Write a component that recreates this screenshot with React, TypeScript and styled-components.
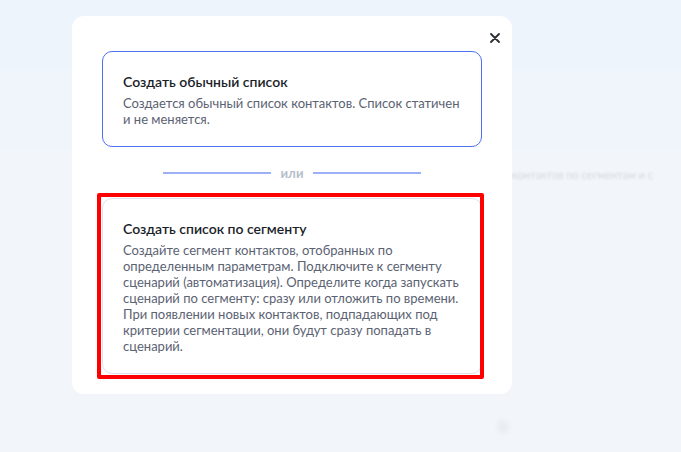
import styled, { createGlobalStyle } from 'styled-components';

const GlobalStyle = createGlobalStyle`
    html, body {
        margin: 0;
        padding: 0;
    }
    body {
        font-family: Lato, Roboto, sans-serif;
        background: #f1f5fa;
    }
`;

const Page = styled.div`
    position: relative;
    width: 681px;
    height: 452px;
    overflow: hidden;
    background: linear-gradient(#eef4fc 0, #eef4fc 70px, #f0f5fb 70px, #f0f5fb 150px, #f2f6fa 150px);
`;

const GhostText = styled.div`
    position: absolute;
    left: 512px;
    top: 168px;
    font-size: 11px;
    color: #d3d9e2;
    filter: blur(1px);
    white-space: nowrap;
`;

const GhostDot = styled.div`
    position: absolute;
    left: 497px;
    top: 420px;
    width: 12px;
    height: 14px;
    border-radius: 50%;
    background: #e9edf2;
    filter: blur(2px);
`;

const Modal = styled.div`
    position: absolute;
    left: 72px;
    top: 16px;
    width: 440px;
    box-sizing: border-box;
    padding: 35px 30px 20px;
    background: #fff;
    border-radius: 12px;
    display: flex;
    flex-direction: column;
`;

const Close = styled.button`
    position: absolute;
    top: 13px;
    right: 8px;
    width: 18px;
    height: 18px;
    padding: 0;
    border: 0;
    background: none;
    display: flex;
    align-items: center;
    justify-content: center;
    cursor: pointer;
`;

const Card = styled.div<{ $active?: boolean; $marked?: boolean }>`
    position: relative;
    border: 1px solid ${p => (p.$active ? '#4d71f0' : '#e1e1ee')};
    border-radius: 10px;
    padding: 20px 18px 19px 20px;
    ${p =>
        p.$marked &&
        `&::after {
            content: '';
            position: absolute;
            inset: -6px -3px -6px -6px;
            border: 4px solid #ff0000;
            border-radius: 2px;
            pointer-events: none;
        }`}
`;

const CardTitle = styled.div`
    font-size: 14px;
    font-weight: 600;
    line-height: 20px;
    color: #1a1e28;
    margin-bottom: 3px;
`;

const CardText = styled.div`
    font-size: 13px;
    line-height: 16px;
    color: #5b6272;
`;

const Divider = styled.div`
    display: flex;
    align-items: center;
    justify-content: center;
    gap: 10px;
    height: 51px;
`;

const Line = styled.span`
    width: 108px;
    height: 2px;
    background: #9db0f6;
`;

const Or = styled.span`
    font-size: 13px;
    font-weight: 700;
    color: #b6becb;
`;

function App() {
    return (
        <Page>
            <GlobalStyle />
            <GhostText>контактов по сегментам и с</GhostText>
            <GhostDot />
            <Modal>
                <Close aria-label="Закрыть">
                    <svg width="10" height="10" viewBox="0 0 10 10">
                        <path d="M1 1L9 9M9 1L1 9" stroke="#2a2d33" strokeWidth="1.8" strokeLinecap="round" />
                    </svg>
                </Close>
                <Card $active>
                    <CardTitle>Создать обычный список</CardTitle>
                    <CardText>
                        Создается обычный список контактов. Список статичен и не меняется.
                    </CardText>
                </Card>
                <Divider>
                    <Line />
                    <Or>или</Or>
                    <Line />
                </Divider>
                <Card $marked>
                    <CardTitle>Создать список по сегменту</CardTitle>
                    <CardText>
                        Создайте сегмент контактов, отобранных по определенным параметрам. Подключите к сегменту
                        сценарий (автоматизация). Определите когда запускать сценарий по сегменту: сразу или
                        отложить по времени. При появлении новых контактов, подпадающих под критерии сегментации,
                        они будут сразу попадать в сценарий.
                    </CardText>
                </Card>
            </Modal>
        </Page>
    );
}

export default App;
